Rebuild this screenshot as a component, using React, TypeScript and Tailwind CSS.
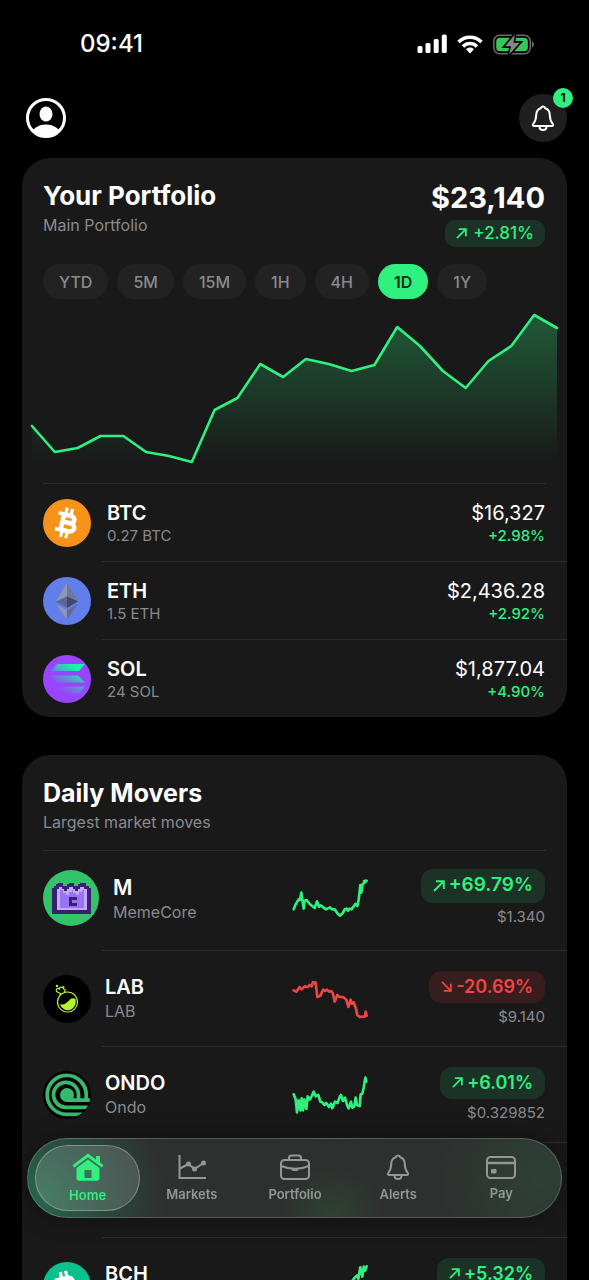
import React from 'react';

type Holding = { symbol: string; amount: string; value: string; change: string; icon: React.ReactNode };

type Mover = {
  symbol: string;
  name: string;
  change: string;
  price: string;
  up: boolean;
  large?: boolean;
  points: string;
  viewBox: string;
  icon: React.ReactNode;
};

const GREEN = '#30f080';
const RED = '#ef4444';

const ranges = ['YTD', '5M', '15M', '1H', '4H', '1D', '1Y'];

// Portfolio values for the selected range, as heights inside the 184px chart
const history = [
  127, 153, 149, 137, 137, 153, 157, 163, 111, 99, 65, 78, 60, 65, 72, 66, 28, 47, 72, 89, 62, 47, 16, 29,
];

function BitcoinIcon({ color, angle, className }: { color: string; angle: number; className: string }) {
  return (
    <svg viewBox="0 0 48 48" className={className} aria-hidden="true">
      <circle cx="24" cy="24" r="24" fill={color} />
      <g transform={`rotate(${angle} 24 24)`} fill="none" stroke="#fff">
        <path d="M19.2 14.500V33.500M19 16.200H26C32 16.200 32 23.500 26 23.500H19M26 23.500C34.200 23.500 34.200 31.800 26.500 31.800H19" strokeWidth="4.600" />
        <path d="M13.500 15.900H20M13.500 32.100H20" strokeWidth="3.800" />
        <path d="M20.800 9V16M26.200 9V16M20.800 32V39M26.200 32V39" strokeWidth="3.200" />
      </g>
    </svg>
  );
}

function EthereumIcon() {
  return (
    <svg viewBox="0 0 48 48" className="size-12" aria-hidden="true">
      <circle cx="24" cy="24" r="24" fill="#627eea" />
      <path d="M24 6L13 24.5L24 19.5Z" fill="#8f97b5" />
      <path d="M24 6L35 24.5L24 19.5Z" fill="#6f7794" />
      <path d="M13 24.5L24 19.5V31Z" fill="#5f668c" />
      <path d="M35 24.5L24 19.5V31Z" fill="#41486e" />
      <path d="M13 27L24 33.5V42.5Z" fill="#8f97b5" />
      <path d="M35 27L24 33.5V42.5Z" fill="#636b8e" />
    </svg>
  );
}

function SolanaIcon() {
  return (
    <svg viewBox="0 0 48 48" className="size-12" aria-hidden="true">
      <defs>
        <linearGradient id="sol" gradientUnits="userSpaceOnUse" x1="14" y1="38" x2="36" y2="8">
          <stop offset="0.1" stopColor="#9945ff" />
          <stop offset="0.45" stopColor="#5f8fd6" />
          <stop offset="0.85" stopColor="#19f5a8" />
        </linearGradient>
      </defs>
      <circle cx="24" cy="24" r="24" fill="#9945ff" />
      <path d="M14 9H42L36 16H8Z" fill="url(#sol)" />
      <path d="M8 20.5H35L42 27.5H14Z" fill="url(#sol)" />
      <path d="M14 31.5H42L36 38.5H8Z" fill="url(#sol)" />
    </svg>
  );
}

function MemeCoreIcon() {
  return (
    <svg viewBox="0 0 56 56" className="size-14" shapeRendering="crispEdges" aria-hidden="true">
      <circle cx="28" cy="28" r="28" fill="#34c26b" shapeRendering="auto" />
      <path d="M9 18H11V16H13V14H15V13H20V16H24V14H26V13H31V16H35V14H37V13H43V16H46V18H48V44H9Z" fill="#3a2070" />
      <path d="M14 19H16V17H19V19H21V21H24V19H26V17H30V19H32V21H35V19H37V17H41V19H44V40H14Z" fill="#c3a9ff" />
      <path d="M17 20H20V23H23V25H26V22H29V20H30V23H33V25H36V22H39V20H41V38H17Z" fill="#9a72f5" />
      <path d="M26 27H34V30H29V33H34V36H26Z" fill="#3a2070" />
    </svg>
  );
}

function LabIcon() {
  return (
    <svg viewBox="0 0 48 48" className="size-12" aria-hidden="true">
      <circle cx="24" cy="24" r="24" fill="#000" />
      <g fill="none" stroke="#b5f52a" strokeWidth="1.200">
        <circle cx="24.500" cy="27" r="10" />
        <path d="M16.800 20.500L17.500 18.500L13.500 16.500C12.500 14 14.500 12.500 16.500 14C16.500 11.500 20.500 11.500 20.500 14C23 14 22.500 16.500 20.800 17.200" />
      </g>
      <path d="M17 29C20.500 30.500 23.500 28.500 26 25.500C28 23 30.500 22.500 32.500 24C34 31 29 35.500 24.500 35.300C21 35 18 32.500 17 29Z" fill="#b5f52a" />
      <circle cx="14" cy="11" r="1.200" fill="#b5f52a" />
      <circle cx="20.500" cy="12" r="1" fill="#b5f52a" />
    </svg>
  );
}

function OndoIcon() {
  return (
    <svg viewBox="0 0 48 48" className="size-12" aria-hidden="true">
      <defs>
        <clipPath id="ondo">
          <circle cx="24" cy="24" r="23.500" />
        </clipPath>
      </defs>
      <circle cx="24" cy="24" r="24" fill="#000" />
      <g clipPath="url(#ondo)">
        <circle cx="24" cy="24" r="7" fill="#38b86c" />
        <g fill="none" stroke="#38b86c" strokeWidth="3.800">
          <path d="M24 29.200H47" />
          <path d="M35.500 29V24A12.500 12.500 0 1 0 24 36.300H47" />
          <path d="M43.200 29V24A19.500 19.500 0 1 0 24 43.300H45" />
        </g>
      </g>
    </svg>
  );
}

const holdings: Holding[] = [
  { symbol: 'BTC', amount: '0.27 BTC', value: '$16,327', change: '+2.98%', icon: <BitcoinIcon color="#f7931a" angle={13} className="size-12" /> },
  { symbol: 'ETH', amount: '1.5 ETH', value: '$2,436.28', change: '+2.92%', icon: <EthereumIcon /> },
  { symbol: 'SOL', amount: '24 SOL', value: '$1,877.04', change: '+4.90%', icon: <SolanaIcon /> },
];

const movers: Mover[] = [
  {
    symbol: 'M',
    name: 'MemeCore',
    change: '+69.79%',
    price: '$1.340',
    up: true,
    large: true,
    viewBox: '25 24 225 120',
    points:
      '27,118 33,103 42,88 46,90 50,68 57,116 60,92 66,90 75,102 90,114 97,94 103,110 108,106 116,112 124,118 136,112 142,118 150,118 158,130 166,137 174,130 180,118 186,116 190,122 195,116 201,118 212,102 218,108 222,90 227,45 230,68 234,42 240,38 246,32 238,33',
    icon: <MemeCoreIcon />,
  },
  {
    symbol: 'LAB',
    name: 'LAB',
    change: '-20.69%',
    price: '$9.140',
    up: false,
    viewBox: '40 354 225 120',
    points:
      '42,388 50,392 60,378 66,385 75,376 84,378 90,372 96,376 100,363 104,367 108,364 113,408 122,404 130,386 136,390 142,386 148,392 155,390 160,398 165,422 173,402 180,408 190,408 200,416 206,438 213,416 216,428 222,424 228,440 233,462 240,468 256,466 258,452 261,464',
    icon: <LabIcon />,
  },
  {
    symbol: 'ONDO',
    name: 'Ondo',
    change: '+6.01%',
    price: '$0.329852',
    up: true,
    viewBox: '40 642 225 120',
    points:
      '42,700 48,715 52,754 57,718 62,748 66,712 70,748 74,716 80,744 84,706 90,716 96,706 102,692 108,706 116,702 122,722 128,724 134,732 140,726 148,738 154,728 158,742 166,722 174,726 180,708 184,702 190,720 196,710 202,732 207,742 214,722 218,740 224,736 228,710 232,732 240,735 243,700 248,698 252,680 257,650 260,662',
    icon: <OndoIcon />,
  },
];

const bch: Mover = {
  symbol: 'BCH',
  name: 'Bitcoin Cash',
  change: '+5.32%',
  price: '$512.40',
  up: true,
  viewBox: '40 442 225 120',
  points: '42,545 60,530 80,540 110,520 140,530 170,505 200,515 224,478 232,470 236,480 242,446 248,474 252,444 256,456 261,443',
  icon: <BitcoinIcon color="#0ac18e" angle={-14} className="size-12" />,
};

function Arrow({ up, className }: { up: boolean; className: string }) {
  return (
    <svg viewBox="0 0 12 12" className={className} fill="none" stroke="currentColor" strokeWidth="1.900" aria-hidden="true">
      {up ? <path d="M1 11L10.500 1.500M3 1.200H10.800V9" /> : <path d="M1 1L10.500 10.500M3 10.800H10.800V3" />}
    </svg>
  );
}

function BellIcon({ className }: { className: string }) {
  return (
    <svg viewBox="0 0 24 26" className={className} fill="none" stroke="currentColor" strokeWidth="2" strokeLinejoin="round" aria-hidden="true">
      <path d="M12 1.500C10.800 1.500 10 2.300 9.800 3.300C6.800 4.300 5.300 6.800 5.200 10C5.100 14.500 4.500 16.200 2.500 18.500C1.300 20 1.600 21 3 21H21C22.400 21 22.700 20 21.500 18.500C19.500 16.200 18.900 14.500 18.800 10C18.700 6.800 17.200 4.300 14.200 3.300C14 2.300 13.200 1.500 12 1.500Z" />
      <path d="M8.500 21.500C8.500 23.800 10 25 12 25S15.500 23.800 15.500 21.500" />
    </svg>
  );
}

function PortfolioChart() {
  const step = 525 / (history.length - 1);
  const line = history.map((y, i) => `${(i * step).toFixed(1)},${y}`).join(' ');

  return (
    <svg viewBox="0 0 525 184" preserveAspectRatio="none" className="block h-46 w-full overflow-visible" role="img" aria-label="Portfolio value">
      <defs>
        <linearGradient id="area" gradientUnits="userSpaceOnUse" x1="0" y1="16" x2="0" y2="163">
          <stop offset="0" stopColor={GREEN} stopOpacity="0.3" />
          <stop offset="1" stopColor={GREEN} stopOpacity="0" />
        </linearGradient>
      </defs>
      <polygon points={`0,163 ${line} 525,163`} fill="url(#area)" />
      <polyline points={line} fill="none" stroke={GREEN} strokeWidth="2.600" strokeLinecap="round" strokeLinejoin="round" />
    </svg>
  );
}

function StatusBar() {
  return (
    <div className="flex h-22 items-center justify-between pr-[54px] pl-20">
      <span className="text-2xl font-medium">09:41</span>
      <div className="flex items-center gap-[10px]">
        <svg viewBox="0 0 30 20" className="h-5 w-[30px]" fill="#fff" aria-hidden="true">
          <rect x="0.500" y="12" width="5" height="7" rx="1.500" />
          <rect x="8.500" y="9" width="5" height="10" rx="1.500" />
          <rect x="16.700" y="5" width="5" height="14" rx="1.500" />
          <rect x="24.800" y="0.500" width="5" height="18.500" rx="1.500" />
        </svg>
        <svg viewBox="0 0 26 19" className="h-[19px] w-[26px]" fill="none" stroke="#fff" strokeWidth="3.500" aria-hidden="true">
          <path d="M1.500 7C8 0.500 18 0.500 24.500 7" />
          <path d="M6 11.500C10 7.600 16 7.600 20 11.500" />
          <path d="M9 14.200C11.300 12 14.700 12 17 14.200L13 18.500Z" fill="#fff" stroke="none" />
        </svg>
        <svg viewBox="0 0 42 21" className="h-[21px] w-[42px]" aria-hidden="true">
          <rect x="0.800" y="1.300" width="36.500" height="18.400" rx="6" fill="none" stroke="#6b6b6b" strokeWidth="1.500" />
          <path d="M39 7.500C41.500 8.500 41.500 12.500 39 13.500Z" fill="#6b6b6b" />
          <rect x="3.200" y="3.700" width="31.700" height="13.600" rx="4" fill="#34c759" />
          <path d="M21.800 0.500L12 12.300H18L16.200 20.500L26.800 8.700H20.500Z" fill="#858585" stroke="#000" strokeWidth="3.200" paintOrder="stroke" />
        </svg>
      </div>
    </div>
  );
}

function MoverRow({ mover }: { mover: Mover }) {
  return (
    <li className={`flex items-center pr-[22px] pl-[21px] ${mover.large ? 'h-[99px] pb-[6px]' : 'h-[95px]'}`}>
      {mover.icon}
      <div className={`ml-[14px] ${mover.large ? 'w-[152px] pt-[5px]' : 'w-40'}`}>
        <p className={`leading-6 font-semibold ${mover.large ? 'text-[21px]' : 'text-xl'}`}>{mover.symbol}</p>
        <p className="text-base leading-6 text-[#8a8a8e]">{mover.name}</p>
      </div>
      <div className="flex flex-1 justify-center">
        <svg
          viewBox={mover.viewBox}
          className="h-10 w-[75px] overflow-visible"
          fill="none"
          stroke={mover.up ? GREEN : RED}
          strokeWidth="8"
          strokeLinejoin="round"
          strokeLinecap="round"
          aria-hidden="true"
        >
          <polyline points={mover.points} />
        </svg>
      </div>
      <div className="flex w-[150px] flex-col items-end gap-1">
        <span
          className={`flex items-center gap-1 rounded-xl px-3 font-semibold ${mover.large ? 'h-[34px] text-[19px]' : 'h-8 text-lg'} ${
            mover.up ? 'bg-[#1c3226] text-[#30f080]' : 'bg-[#371d1d] text-[#ef4444]'
          }`}
        >
          <Arrow up={mover.up} className={mover.large ? 'size-3' : 'size-[11px]'} />
          {mover.change}
        </span>
        <span className="text-[15px] leading-5 text-[#8a8a8e]">{mover.price}</span>
      </div>
    </li>
  );
}

const tab = 'flex flex-1 flex-col items-center justify-center gap-[6px] text-[13px] leading-4 font-semibold text-[#959796]';

function TabBar() {
  return (
    <nav
      aria-label="Main"
      className="fixed inset-x-[27px] bottom-[62px] flex h-20 items-stretch rounded-full border border-white/20 bg-[#2e302f] bg-[radial-gradient(circle_at_2%_75%,#27654e_0%,transparent_24%),radial-gradient(circle_at_57%_100%,#2d4232_0%,transparent_16%),radial-gradient(circle_at_96%_50%,#2e4036_0%,transparent_20%)] py-[6px] pr-2 pl-[7px] shadow-[0_0_24px_rgba(0,0,0,0.35)]"
    >
      <a
        href="#home"
        aria-current="page"
        className="flex flex-1 flex-col items-center justify-center gap-[6px] rounded-full border border-white/30 bg-white/15 text-[13px] leading-4 font-semibold text-[#30f080]"
      >
        <svg viewBox="0 0 32 28" className="h-7 w-8" fill="currentColor" aria-hidden="true">
          <path d="M16 0.500L0.500 12.200L2.300 14.500L16 4.200L29.700 14.500L31.500 12.200L28 9.500V3H24V6.500Z" />
          <path fillRule="evenodd" d="M16 6.500L4.500 15V25C4.500 26.800 5.500 27.800 7.200 27.800H24.800C26.500 27.800 27.500 26.800 27.500 25V15ZM12.500 17H19.500V25H12.500Z" />
        </svg>
        Home
      </a>
      <a href="#markets" className={tab}>
        <svg viewBox="0 0 28 26" className="h-[26px] w-7" fill="none" stroke="currentColor" strokeWidth="2" aria-hidden="true">
          <path d="M1.500 1V24H28M2 14.500L10.500 10L16.500 15L25.500 9" />
          <circle cx="10.500" cy="10" r="1.500" fill="currentColor" />
          <circle cx="16.500" cy="15" r="1.500" fill="currentColor" />
          <circle cx="25.500" cy="9" r="1.500" fill="currentColor" />
        </svg>
        Markets
      </a>
      <a href="#portfolio" className={tab}>
        <svg viewBox="0 0 30 26" className="h-[26px] w-[30px]" fill="none" stroke="currentColor" strokeWidth="2" aria-hidden="true">
          <rect x="1" y="6" width="28" height="19" rx="3.500" />
          <path d="M9 6V4C9 2.300 9.800 1.500 11.500 1.500H18.500C20.200 1.500 21 2.300 21 4V6M1 12C9.500 15.500 20.500 15.500 29 12" />
          <path d="M11.500 14.500H18.500V15C18.500 16.500 17.500 17 16.500 17H13.500C12.500 17 11.500 16.500 11.500 15Z" fill="currentColor" stroke="none" />
        </svg>
        Portfolio
      </a>
      <a href="#alerts" className={tab}>
        <BellIcon className="h-[26px] w-6" />
        Alerts
      </a>
      <a href="#pay" className={tab}>
        <svg viewBox="0 0 30 23" className="h-[23px] w-[30px]" fill="none" stroke="currentColor" strokeWidth="2" aria-hidden="true">
          <rect x="1" y="1" width="28" height="21" rx="3.500" />
          <path d="M1 7H29" strokeWidth="2.500" />
          <rect x="5" y="13" width="5.500" height="4.500" rx="1" fill="currentColor" stroke="none" />
        </svg>
        Pay
      </a>
    </nav>
  );
}

export default function App() {
  return (
    <div className="h-screen overflow-y-auto bg-black font-['Inter','Liberation_Sans',sans-serif] text-white [scrollbar-width:none]">
      <StatusBar />

      <header className="flex items-center justify-between px-[22px] py-[6px]">
        <button type="button" aria-label="Profile" className="ml-1">
          <svg viewBox="0 0 40 40" className="size-10" aria-hidden="true">
            <defs>
              <clipPath id="avatar">
                <circle cx="20" cy="20" r="19" />
              </clipPath>
            </defs>
            <circle cx="20" cy="20" r="18.500" fill="none" stroke="#fff" strokeWidth="3" />
            <ellipse cx="20" cy="16" rx="6.500" ry="7.500" fill="#fff" />
            <ellipse cx="20" cy="38" rx="15" ry="11.500" fill="#fff" clipPath="url(#avatar)" />
          </svg>
        </button>
        <button type="button" aria-label="Notifications, 1 new" className="relative flex size-12 items-center justify-center rounded-full bg-[#1f1f1f]">
          <BellIcon className="h-[26px] w-6" />
          <span className="absolute -top-[6px] -right-[6px] flex size-5 items-center justify-center rounded-full bg-[#30f080] text-xs font-bold text-black">
            1
          </span>
        </button>
      </header>

      <main className="mt-[10px] space-y-[38px] px-[22px] pb-40">
        {/* Portfolio summary */}
        <section className="overflow-hidden rounded-[28px] bg-[#191919]">
          <div className="flex justify-between pt-[22px] pr-[22px] pl-[21px]">
            <div>
              <h1 className="text-[26px] leading-8 font-bold">Your Portfolio</h1>
              <p className="text-base leading-[26px] text-[#8a8a8e]">Main Portfolio</p>
            </div>
            <div className="flex flex-col items-end">
              <p className="text-[29px] leading-9 font-bold">$23,140</p>
              <span className="mt-1 flex h-[27px] items-center gap-[6px] rounded-[10px] bg-[#1c3226] px-[11px] text-[17px] font-medium text-[#30f080]">
                <Arrow up className="size-[11px]" />
                +2.81%
              </span>
            </div>
          </div>

          <div className="mt-[17px] flex gap-[9px] pl-[21px]">
            {ranges.map((range) => (
              <button
                key={range}
                type="button"
                aria-pressed={range === '1D'}
                className={`h-[35px] rounded-full px-4 text-base ${
                  range === '1D' ? 'bg-[#30f080] font-semibold text-[#0c2e19]' : 'bg-[#222222] font-medium text-[#8a8a8e]'
                }`}
              >
                {range}
              </button>
            ))}
          </div>

          <div className="px-[10px]">
            <PortfolioChart />
          </div>
          <div className="mx-[21px] h-px bg-[#2c2c2d]" />

          <ul>
            {holdings.map((holding, index) => (
              <React.Fragment key={holding.symbol}>
                {index > 0 && <li role="separator" className="ml-20 h-px bg-[#2c2c2d]" />}
                <li className="flex h-[77px] items-center pr-[22px] pl-[21px]">
                  {holding.icon}
                  <div className="ml-4 flex-1 pt-[3px]">
                    <p className="text-xl leading-6 font-semibold">{holding.symbol}</p>
                    <p className="text-[15px] leading-[22px] text-[#8a8a8e]">{holding.amount}</p>
                  </div>
                  <div className="pt-[3px] text-right">
                    <p className="text-xl leading-6">{holding.value}</p>
                    <p className="text-[15px] leading-[22px] font-medium text-[#30f080]">{holding.change}</p>
                  </div>
                </li>
              </React.Fragment>
            ))}
          </ul>
        </section>

        {/* Movers */}
        <section className="overflow-hidden rounded-[28px] bg-[#191919]">
          <div className="px-[21px] pt-[22px] pb-[15px]">
            <h2 className="text-[25px] leading-8 font-bold">Daily Movers</h2>
            <p className="text-base leading-[26px] text-[#8a8a8e]">Largest market moves</p>
          </div>
          <div className="mx-[21px] h-px bg-[#2c2c2d]" />
          <ul>
            {movers.map((mover) => (
              <React.Fragment key={mover.symbol}>
                <MoverRow mover={mover} />
                <li role="separator" className="ml-20 h-px bg-[#2c2c2d]" />
              </React.Fragment>
            ))}
            <li aria-hidden="true" className="h-[94px]" />
            <li role="separator" className="ml-20 h-px bg-[#2c2c2d]" />
            <MoverRow mover={bch} />
          </ul>
        </section>
      </main>

      <TabBar />
    </div>
  );
}
